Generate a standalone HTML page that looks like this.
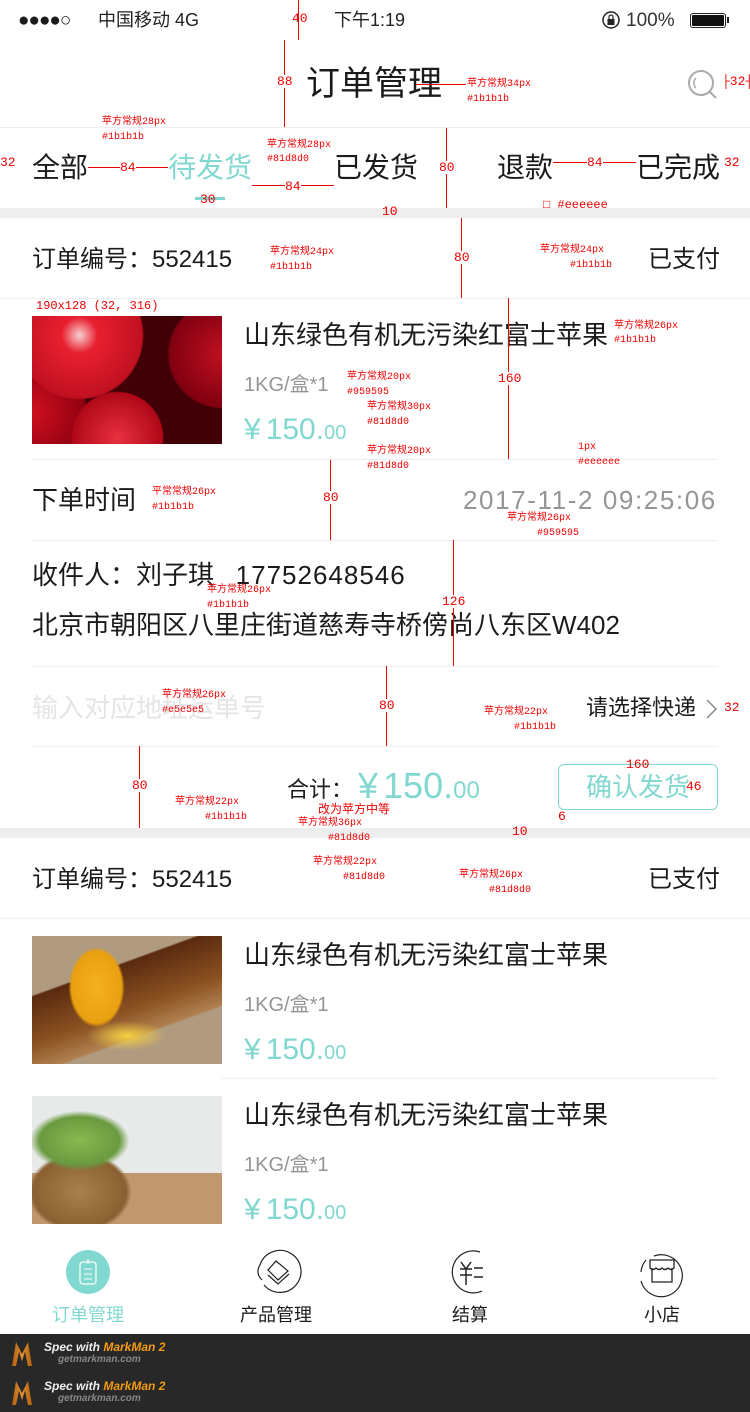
<!DOCTYPE html>
<html><head><meta charset="utf-8">
<style>
*{margin:0;padding:0;box-sizing:border-box}
body{width:750px;height:1412px;position:relative;background:#fff;font-family:"Liberation Sans","Noto Sans CJK SC",sans-serif;color:#1b1b1b;overflow:hidden}
.a{position:absolute;white-space:nowrap;line-height:1}
.ln{position:absolute;height:1px;background:#eee}
.band{position:absolute;left:0;width:750px;height:10px;background:#eee}
.t{color:#81d8d0}
.g{color:#959595}
.y{margin-right:5px}
.r{position:absolute;color:#e00;font-size:10px;line-height:1;white-space:nowrap;font-family:"Liberation Mono","Noto Sans CJK SC",monospace}
.rv{position:absolute;width:1px;background:#e00}
.rh{position:absolute;height:1px;background:#e00}
.img{position:absolute;left:32px;width:190px;height:128px}
</style></head><body>
<!-- status bar -->
<div class="a" style="left:18px;top:11px;font-size:19px;letter-spacing:-1px">●●●●○</div>
<div class="a" style="left:98px;top:11px;font-size:18px;color:#222">中国移动 4G</div>
<div class="a" style="left:334px;top:11px;font-size:18px;color:#222">下午1:19</div>
<svg style="position:absolute;left:601px;top:10px" width="20" height="20"><circle cx="10" cy="10" r="8" fill="none" stroke="#222" stroke-width="1.5"/><rect x="6.5" y="9" width="7" height="6" fill="#222"/><path d="M8 9 V7 a2 2 0 0 1 4 0 V9" fill="none" stroke="#222" stroke-width="1.2"/></svg>
<div class="a" style="left:626px;top:11px;font-size:19px;color:#333">100%</div>
<div style="position:absolute;left:690px;top:13px;width:36px;height:15px;border:1px solid #222;border-radius:3px;padding:1px"><div style="background:#111;width:100%;height:100%;border-radius:1px"></div></div>
<div style="position:absolute;left:727px;top:17px;width:2px;height:6px;background:#222"></div>
<!-- title -->
<div class="a" style="left:306px;top:67px;font-size:34px">订单管理</div>
<svg style="position:absolute;left:686px;top:68px" width="34" height="34"><circle cx="15" cy="15" r="12" fill="none" stroke="#aaa" stroke-width="2"/><path d="M24 24 L30 30" stroke="#aaa" stroke-width="2"/><path d="M10 10 A7 7 0 0 0 10 20" stroke="#aaa" fill="none" stroke-width="1.5"/></svg>
<div class="ln" style="left:0;top:127px;width:750px"></div>
<!-- tabs -->
<div class="a" style="left:32px;top:154px;font-size:28px">全部</div>
<div class="a t" style="left:168px;top:154px;font-size:28px">待发货</div>
<div class="a" style="left:334px;top:154px;font-size:28px">已发货</div>
<div class="a" style="left:497px;top:154px;font-size:28px">退款</div>
<div class="a" style="left:636px;top:154px;font-size:28px">已完成</div>
<div style="position:absolute;left:195px;top:197px;width:30px;height:3px;background:#81d8d0"></div>
<div class="band" style="top:208px"></div>
<!-- order 1 header -->
<div class="a" style="left:32px;top:248px;font-size:24px">订单编号：552415</div>
<div class="a" style="left:648px;top:248px;font-size:24px">已支付</div>
<div class="ln" style="left:0;top:298px;width:750px"></div>
<!-- product 1 -->
<div class="img" style="top:316px;background:radial-gradient(circle at 25% 15%,#f8d0d0 0,#e82030 10%,#c01020 35%,transparent 36%),radial-gradient(circle at 45% 95%,#e83040 0,#b00818 28%,transparent 29%),radial-gradient(circle at 0% 75%,#d01020 0,#900010 25%,transparent 26%),radial-gradient(circle at 100% 30%,#c01020 0,#800010 25%,transparent 26%),#400006"></div>
<div class="a" style="left:244px;top:322px;font-size:26px">山东绿色有机无污染红富士苹果</div>
<div class="a g" style="left:244px;top:375px;font-size:20px">1KG/盒*1</div>
<div class="a t" style="left:244px;top:415px;font-size:30px"><span class="y">¥</span>150.<span style="font-size:20px">00</span></div>
<div class="ln" style="left:32px;top:459px;width:686px"></div>
<div class="a" style="left:32px;top:487px;font-size:26px">下单时间</div>
<div class="a g" style="left:463px;top:487px;font-size:26px;letter-spacing:1.6px">2017-11-2 09:25:06</div>
<div class="ln" style="left:32px;top:540px;width:686px"></div>
<div class="a" style="left:32px;top:562px;font-size:26px">收件人：刘子琪&nbsp;&nbsp;&nbsp;<span style="letter-spacing:1px">17752648546</span></div>
<div class="a" style="left:32px;top:612px;font-size:26px">北京市朝阳区八里庄街道慈寿寺桥傍尚八东区W402</div>
<div class="ln" style="left:32px;top:666px;width:686px"></div>
<div class="a" style="left:32px;top:695px;font-size:26px;color:#e5e5e5">输入对应地址运单号</div>
<div class="a" style="left:586px;top:697px;font-size:22px">请选择快递</div>
<svg style="position:absolute;left:705px;top:698px" width="14" height="22"><path d="M2 2 L11 11 L2 20" fill="none" stroke="#888" stroke-width="1.5"/></svg>
<div class="ln" style="left:32px;top:746px;width:686px"></div>
<div class="a" style="left:287px;top:779px;font-size:22px">合计：</div>
<div class="a t" style="left:358px;top:768px;font-size:36px"><span class="y">¥</span>150.<span style="font-size:24px">00</span></div>
<div style="position:absolute;left:558px;top:764px;width:160px;height:46px;border:1px solid #81d8d0;border-radius:6px"></div>
<div class="a t" style="left:586px;top:774px;font-size:26px">确认发货</div>
<div class="band" style="top:828px"></div>
<!-- order 2 -->
<div class="a" style="left:32px;top:868px;font-size:24px">订单编号：552415</div>
<div class="a" style="left:648px;top:868px;font-size:24px">已支付</div>
<div class="ln" style="left:0;top:918px;width:750px"></div>
<div class="img" style="top:936px;background:radial-gradient(ellipse 28px 40px at 34% 40%,#f5b020 0,#e8a010 90%,transparent 100%),radial-gradient(ellipse 40px 15px at 50% 78%,#f5d040 0,transparent 100%),linear-gradient(160deg,transparent 30%,#5a2a10 31%,#8a5020 55%,#b08050 70%,transparent 71%),#b09a80"></div>
<div class="a" style="left:244px;top:942px;font-size:26px">山东绿色有机无污染红富士苹果</div>
<div class="a g" style="left:244px;top:995px;font-size:20px">1KG/盒*1</div>
<div class="a t" style="left:244px;top:1035px;font-size:30px"><span class="y">¥</span>150.<span style="font-size:20px">00</span></div>
<div class="ln" style="left:222px;top:1078px;width:496px"></div>
<div class="img" style="top:1096px;background:radial-gradient(ellipse 50px 30px at 25% 35%,#8ab850 0,#6a9a40 80%,transparent 100%),radial-gradient(ellipse 52px 40px at 25% 75%,#a88050 0,#8a6030 90%,transparent 100%),linear-gradient(180deg,#e8eaea 0 60%,#c09870 60%),#e8eaea"></div>
<div class="a" style="left:244px;top:1102px;font-size:26px">山东绿色有机无污染红富士苹果</div>
<div class="a g" style="left:244px;top:1155px;font-size:20px">1KG/盒*1</div>
<div class="a t" style="left:244px;top:1195px;font-size:30px"><span class="y">¥</span>150.<span style="font-size:20px">00</span></div>
<!-- tab bar -->
<svg style="position:absolute;left:0;top:1248px" width="750" height="56">
<circle cx="88" cy="24" r="22" fill="#81d8d0"/>
<rect x="80" y="14" width="16" height="22" rx="3" fill="none" stroke="#fff" stroke-width="1.2"/>
<path d="M84 21h8M84 26h8M84 31h8M88 11v5" stroke="#fff" stroke-width="1"/>
<path d="M262 32 A22 15 0 0 1 260 17 A21 21 0 1 1 264 37" fill="none" stroke="#222" stroke-width="1.2"/>
<path d="M280 12 A22 22 0 1 1 264 38 M264 38 L262 34" fill="none" stroke="#222" stroke-width="0"/>
<path d="M276 13 L288 23 L278 32 L268 22 Z M268 27 L278 36 L289 26" fill="none" stroke="#222" stroke-width="1.2"/>
<path d="M480 4 A21 21 0 1 0 482 43" fill="none" stroke="#222" stroke-width="1.2"/>
<path d="M461 14 L466 21 L471 14 M460 21h12M460 27h12M466 21v16 M474 20h9M474 29h9" fill="none" stroke="#222" stroke-width="1.5"/>
<path d="M654 8 A21 21 0 1 1 643 38" fill="none" stroke="#222" stroke-width="1.2"/><path d="M643 38 L641 33" stroke="#222" stroke-width="1.2"/><path d="M641 24 A21 21 0 0 1 646 12" fill="none" stroke="#222" stroke-width="1.2"/>
<path d="M650 12h24v8q-3 3-6 0q-3 3-6 0q-3 3-6 0q-3 3-6 0z M652 20v14h20v-14" fill="none" stroke="#222" stroke-width="1.3"/>
</svg>
<div class="a t" style="left:52px;top:1306px;font-size:18px">订单管理</div>
<div class="a" style="left:240px;top:1306px;font-size:18px">产品管理</div>
<div class="a" style="left:452px;top:1306px;font-size:18px">结算</div>
<div class="a" style="left:644px;top:1306px;font-size:18px">小店</div>
<!-- markman footer -->
<div style="position:absolute;left:0;top:1334px;width:750px;height:78px;background:#282828"></div>
<div style="position:absolute;left:12px;top:1342px;width:20px;height:24px;background:linear-gradient(90deg,#b06010,#e09030,#b06010);clip-path:polygon(0 100%,20% 0,50% 50%,80% 0,100% 100%,80% 100%,65% 40%,50% 80%,35% 40%,20% 100%)"></div>
<div class="a" style="left:44px;top:1341px;font-size:12px;font-style:italic;font-weight:bold;color:#eee">Spec with <span style="color:#f39a10">MarkMan 2</span></div>
<div class="a" style="left:58px;top:1355px;font-size:10px;font-style:italic;font-weight:bold;color:#888">getmarkman.com</div>
<div style="position:absolute;left:12px;top:1381px;width:20px;height:24px;background:linear-gradient(90deg,#b06010,#e09030,#b06010);clip-path:polygon(0 100%,20% 0,50% 50%,80% 0,100% 100%,80% 100%,65% 40%,50% 80%,35% 40%,20% 100%)"></div>
<div class="a" style="left:44px;top:1380px;font-size:12px;font-style:italic;font-weight:bold;color:#eee">Spec with <span style="color:#f39a10">MarkMan 2</span></div>
<div class="a" style="left:58px;top:1394px;font-size:10px;font-style:italic;font-weight:bold;color:#888">getmarkman.com</div>
<!-- annotations (subset) -->
<div class="rv" style="left:298px;top:0;height:40px"></div><div class="r" style="left:292px;top:12px;font-size:13px">40</div>
<div class="rv" style="left:284px;top:40px;height:87px"></div><div class="r" style="left:277px;top:75px;font-size:13px;background:#fff">88</div>
<div class="rh" style="left:416px;top:84px;width:50px"></div><div class="r" style="left:467px;top:80px">苹方常规34px</div><div class="r" style="left:467px;top:95px">#1b1b1b</div>
<div class="r" style="left:722px;top:75px;font-size:13px">├32┤</div>
<div class="r" style="left:102px;top:118px">苹方常规28px</div><div class="r" style="left:102px;top:133px">#1b1b1b</div>
<div class="r" style="left:267px;top:141px">苹方常规28px</div><div class="r" style="left:267px;top:155px">#81d8d0</div>
<div class="rh" style="left:88px;top:167px;width:80px"></div><div class="r" style="left:120px;top:161px;font-size:13px;background:#fff">84</div>
<div class="rh" style="left:252px;top:185px;width:82px"></div><div class="r" style="left:285px;top:180px;font-size:13px;background:#fff">84</div>
<div class="rh" style="left:553px;top:162px;width:83px"></div><div class="r" style="left:587px;top:156px;font-size:13px;background:#fff">84</div>
<div class="r" style="left:0;top:156px;font-size:13px">32</div><div class="r" style="left:724px;top:156px;font-size:13px">32</div>
<div class="rv" style="left:446px;top:128px;height:80px"></div><div class="r" style="left:439px;top:161px;font-size:13px;background:#fff">80</div>
<div class="r" style="left:200px;top:193px;font-size:13px">30</div>
<div class="r" style="left:543px;top:199px;font-size:12px">□ #eeeeee</div>
<div class="rv" style="left:461px;top:218px;height:80px"></div><div class="r" style="left:454px;top:251px;font-size:13px;background:#fff">80</div>
<div class="r" style="left:270px;top:248px">苹方常规24px</div><div class="r" style="left:270px;top:263px">#1b1b1b</div>
<div class="r" style="left:540px;top:246px">苹方常规24px</div><div class="r" style="left:570px;top:261px">#1b1b1b</div>
<div class="r" style="left:36px;top:300px;font-size:12px">190x128 (32, 316)</div>
<div class="r" style="left:614px;top:322px">苹方常规26px</div><div class="r" style="left:614px;top:336px">#1b1b1b</div>
<div class="rv" style="left:508px;top:298px;height:161px"></div><div class="r" style="left:498px;top:372px;font-size:13px;background:#fff">160</div>
<div class="r" style="left:347px;top:373px">苹方常规20px</div><div class="r" style="left:347px;top:388px">#959595</div>
<div class="r" style="left:367px;top:403px">苹方常规30px</div><div class="r" style="left:367px;top:418px">#81d8d0</div>
<div class="r" style="left:367px;top:447px">苹方常规20px</div><div class="r" style="left:367px;top:462px">#81d8d0</div>
<div class="r" style="left:578px;top:443px">1px</div><div class="r" style="left:578px;top:458px">#eeeeee</div>
<div class="r" style="left:152px;top:488px">平常常规26px</div><div class="r" style="left:152px;top:503px">#1b1b1b</div>
<div class="rv" style="left:330px;top:460px;height:80px"></div><div class="r" style="left:323px;top:491px;font-size:13px;background:#fff">80</div>
<div class="r" style="left:507px;top:514px">苹方常规26px</div><div class="r" style="left:537px;top:529px">#959595</div>
<div class="r" style="left:207px;top:586px">苹方常规26px</div><div class="r" style="left:207px;top:601px">#1b1b1b</div>
<div class="rv" style="left:453px;top:540px;height:126px"></div><div class="r" style="left:442px;top:595px;font-size:13px;background:#fff">126</div>
<div class="r" style="left:162px;top:691px">苹方常规26px</div><div class="r" style="left:162px;top:706px">#e5e5e5</div>
<div class="rv" style="left:386px;top:666px;height:80px"></div><div class="r" style="left:379px;top:699px;font-size:13px;background:#fff">80</div>
<div class="r" style="left:484px;top:708px">苹方常规22px</div><div class="r" style="left:514px;top:723px">#1b1b1b</div>
<div class="r" style="left:724px;top:701px;font-size:13px">32</div>
<div class="rv" style="left:139px;top:746px;height:82px"></div><div class="r" style="left:132px;top:779px;font-size:13px;background:#fff">80</div>
<div class="r" style="left:175px;top:798px">苹方常规22px</div><div class="r" style="left:205px;top:813px">#1b1b1b</div>
<div class="r" style="left:318px;top:804px;font-size:12px">改为苹方中等</div>
<div class="r" style="left:298px;top:819px">苹方常规36px</div><div class="r" style="left:328px;top:834px">#81d8d0</div>
<div class="r" style="left:313px;top:858px">苹方常规22px</div><div class="r" style="left:343px;top:873px">#81d8d0</div>
<div class="r" style="left:459px;top:871px">苹方常规26px</div><div class="r" style="left:489px;top:886px">#81d8d0</div>
<div class="r" style="left:626px;top:758px;font-size:13px">160</div><div class="r" style="left:686px;top:780px;font-size:13px">46</div>
<div class="r" style="left:558px;top:810px;font-size:13px">6</div>
<div class="r" style="left:512px;top:825px;font-size:13px">10</div>
<div class="r" style="left:382px;top:205px;font-size:13px">10</div>
</body></html>
